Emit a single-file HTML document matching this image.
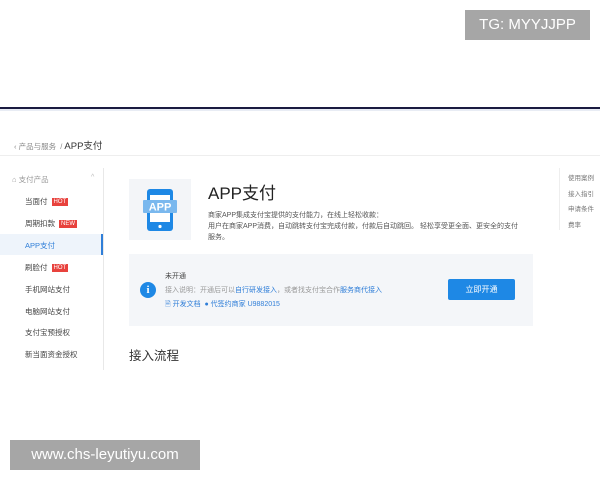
<!DOCTYPE html>
<html><head><meta charset="utf-8"><style>
*{margin:0;padding:0;box-sizing:border-box}
body{width:600px;height:480px;background:#fff;position:relative;overflow:hidden;font-family:"Liberation Sans","Noto Sans CJK SC",sans-serif;color:#333}
.a{position:absolute;white-space:nowrap}
.s{font-size:7.5px;color:#444}
.hot{display:inline-block;background:#e8423d;color:#fff;font-size:6px;padding:0 2px;line-height:8px;margin-left:4px;vertical-align:1px}
</style></head><body>
<div class="a" style="left:465px;top:10px;width:125px;height:30px;background:#a6a6a6;color:#fff;font-size:15px;line-height:30px;text-align:center">TG: MYYJJPP</div>
<div class="a" style="left:0;top:107px;width:600px;height:2px;background:#1a1a40"></div>
<div class="a" style="left:0;top:109px;width:600px;height:2px;background:#e8ecf4"></div>
<div class="a" style="left:14px;top:138px;font-size:7.5px;color:#888">‹ 产品与服务 &nbsp;/ <span style="font-size:9.5px;color:#333">APP支付</span></div>
<div class="a" style="left:0;top:155px;width:600px;height:1px;background:#eee"></div>
<div class="a" style="left:103px;top:168px;width:1px;height:202px;background:#e8e8e8"></div>
<div class="a" style="left:0;top:234px;width:103px;height:21px;background:#eef4fb;border-right:2px solid #2f7ed8"></div>
<div class="a s" style="left:12px;top:174px;color:#999">⌂ 支付产品</div>
<div class="a" style="left:91px;top:174px;font-size:7px;color:#bbb">^</div>
<div class="a s" style="left:25px;top:196px">当面付<span class="hot">HOT</span></div>
<div class="a s" style="left:25px;top:218px">周期扣款<span class="hot">NEW</span></div>
<div class="a s" style="left:25px;top:240px;color:#2f7ed8">APP支付</div>
<div class="a s" style="left:25px;top:262px">刷脸付<span class="hot">HOT</span></div>
<div class="a s" style="left:25px;top:284px">手机网站支付</div>
<div class="a s" style="left:25px;top:306px">电脑网站支付</div>
<div class="a s" style="left:25px;top:327px">支付宝预授权</div>
<div class="a s" style="left:25px;top:349px">新当面资金授权</div>
<div class="a" style="left:129px;top:179px;width:62px;height:61px;background:#f3f5f8"></div>
<svg class="a" style="left:143px;top:187px" width="34" height="46" viewBox="0 0 34 46">
<rect x="4" y="2" width="26" height="42" rx="3" fill="#1e88e5"/>
<rect x="7" y="8" width="20" height="27" fill="#fff"/>
<circle cx="17" cy="39.5" r="1.6" fill="#fff"/>
<rect x="0" y="13" width="34" height="13" rx="1" fill="#7ab8ee"/>
<text x="17" y="23.5" font-size="11" font-weight="bold" fill="#fff" text-anchor="middle" font-family="Liberation Sans">APP</text>
</svg>
<div class="a" style="left:208px;top:179px;font-size:17px;color:#222">APP支付</div>
<div class="a" style="left:208px;top:210px;font-size:7px;color:#555;line-height:11px">商家APP集成支付宝提供的支付能力，在线上轻松收款：<br>用户在商家APP消费，自动跳转支付宝完成付款，付款后自动跳回。 轻松享受更全面、更安全的支付<br>服务。</div>
<div class="a" style="left:129px;top:254px;width:404px;height:72px;background:#f4f6f9"></div>
<div class="a" style="left:140px;top:282px;width:16px;height:16px;border-radius:50%;background:#1e88e5;color:#fff;font-size:11px;font-weight:bold;text-align:center;line-height:16px;font-family:'Liberation Serif',serif">i</div>
<div class="a" style="left:165px;top:271px;font-size:7px;color:#444">未开通</div>
<div class="a" style="left:165px;top:285px;font-size:7px;color:#999">接入说明：开通后可以<span style="color:#2f7ed8">自行研发接入</span>，或者找支付宝合作<span style="color:#2f7ed8">服务商代接入</span></div>
<div class="a" style="left:165px;top:299px;font-size:7px;color:#2f7ed8">🗎 开发文档 &nbsp;● 代签约商家 U9882015</div>
<div class="a" style="left:448px;top:279px;width:67px;height:21px;background:#1e88e5;border-radius:2px;color:#fff;font-size:8px;text-align:center;line-height:21px">立即开通</div>
<div class="a" style="left:129px;top:345px;font-size:12.5px;color:#333">接入流程</div>
<div class="a" style="left:559px;top:168px;width:1px;height:62px;background:#eee"></div>
<div class="a" style="left:568px;top:171px;font-size:6.5px;color:#777;line-height:15.5px">使用案例<br>接入指引<br>申请条件<br>费率</div>
<div class="a" style="left:10px;top:440px;width:190px;height:30px;background:#a6a6a6;color:#fff;font-size:15px;line-height:30px;text-align:center">www.chs-leyutiyu.com</div>
</body></html>
